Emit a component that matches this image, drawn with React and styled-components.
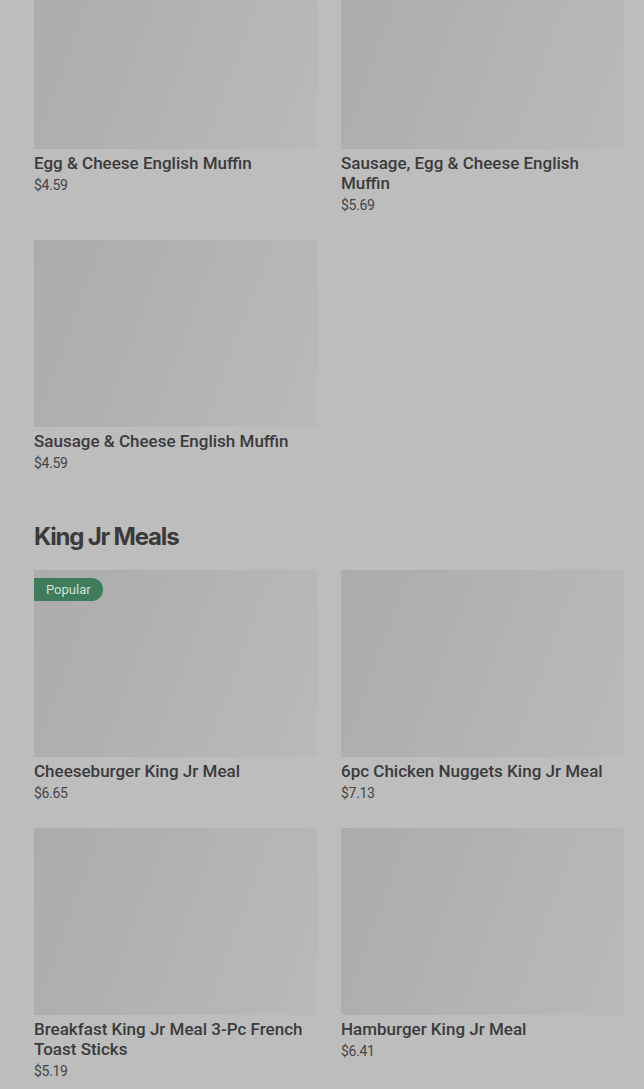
import React from "react";
import styled, { createGlobalStyle } from "styled-components";

const Global = createGlobalStyle`
  html, body { margin: 0; padding: 0; background: #bdbdbd; overflow: hidden; }
  body { font-family: Roboto, "Noto Sans", sans-serif; color: #3b3b3b; }
`;

const Page = styled.div`
  padding: 0 20px 0 34px;
  margin-top: -38px;
  display: flex;
  flex-direction: column;
  gap: 48px;
`;

const Section = styled.section`
  display: flex;
  flex-direction: column;
`;

const Heading = styled.h2`
  margin: 0 0 18px;
  font-family: Inter, "Noto Sans", sans-serif;
  font-size: 24px;
  line-height: 30px;
  font-weight: 700;
  letter-spacing: -1.2px;
  color: #3a3a3a;
`;

const Grid = styled.div`
  display: grid;
  grid-template-columns: 1fr 1fr;
  column-gap: 24px;
  row-gap: 24px;
  align-items: start;
`;

const Card = styled.div`
  display: flex;
  flex-direction: column;
`;

const Image = styled.div`
  position: relative;
  height: 187px;
  background: linear-gradient(110deg, #acacac 0%, #b0b0b0 35%, #b5b5b5 65%, #b9b9b9 100%);
`;

const Badge = styled.span`
  position: absolute;
  left: 0;
  top: 8px;
  height: 23px;
  padding: 0 12px;
  display: flex;
  align-items: center;
  background: #3e7c5c;
  color: #cfe2d6;
  font-size: 13px;
  border-radius: 0 12px 12px 0;
`;

const Title = styled.div`
  margin-top: 4px;
  font-size: 17px;
  line-height: 20px;
  font-weight: 500;
  color: #3b3b3b;
`;

const Price = styled.div`
  margin-top: 2px;
  font-size: 14px;
  line-height: 21px;
  letter-spacing: -0.3px;
  color: #454545;
`;

const breakfast = [
  { name: "Egg & Cheese English Muffin", price: "$4.59" },
  { name: "Sausage, Egg & Cheese English Muffin", price: "$5.69" },
  { name: "Sausage & Cheese English Muffin", price: "$4.59" },
];

const kingJr = [
  { name: "Cheeseburger King Jr Meal", price: "$6.65", popular: true },
  { name: "6pc Chicken Nuggets King Jr Meal", price: "$7.13" },
  { name: "Breakfast King Jr Meal 3-Pc French Toast Sticks", price: "$5.19" },
  { name: "Hamburger King Jr Meal", price: "$6.41" },
];

const Item = ({ item }) => (
  <Card>
    <Image>{item.popular && <Badge>Popular</Badge>}</Image>
    <Title>{item.name}</Title>
    <Price>{item.price}</Price>
  </Card>
);

export default function App() {
  return (
    <>
      <Global />
      <Page>
        <Section>
          <Grid>
            {breakfast.map((it) => (
              <Item key={it.name} item={it} />
            ))}
          </Grid>
        </Section>
        <Section>
          <Heading>King Jr Meals</Heading>
          <Grid>
            {kingJr.map((it) => (
              <Item key={it.name} item={it} />
            ))}
          </Grid>
        </Section>
      </Page>
    </>
  );
}
